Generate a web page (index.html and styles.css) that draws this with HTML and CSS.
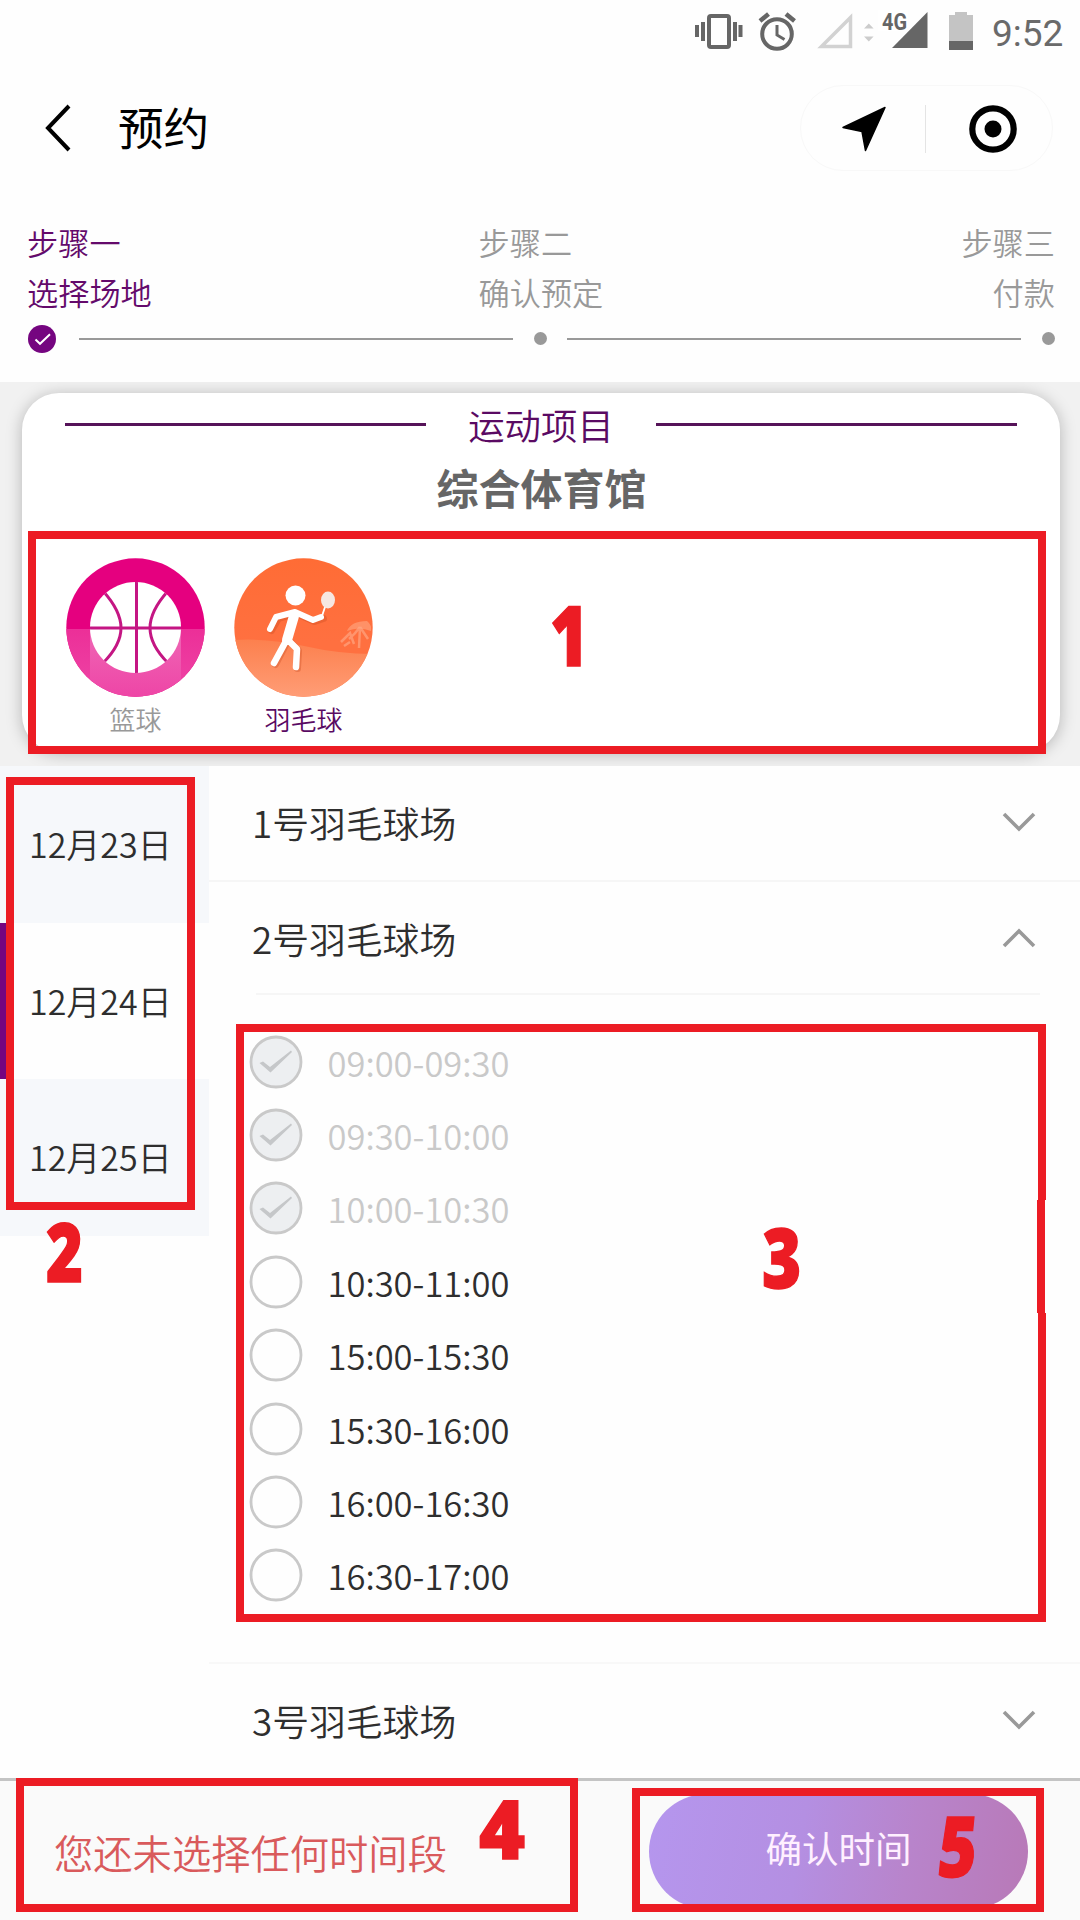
FILE: index.html
```html
<!DOCTYPE html>
<html lang="zh-CN">
<head>
<meta charset="utf-8">
<title>预约</title>
<link rel="stylesheet" href="styles.css">
</head>
<body>
<div class="page">
  <header class="top">
    <svg class="status-icons" width="300" height="56" viewBox="690 0 300 56">
      <g fill="#666">
        <rect x="695" y="25" width="4" height="12"/><rect x="701" y="22" width="4" height="19"/>
        <rect x="733" y="22" width="4" height="19"/><rect x="738.500" y="25" width="4" height="12"/>
      </g>
      <rect x="709" y="16" width="20" height="31" rx="2" fill="none" stroke="#666" stroke-width="4"/>
      <g fill="none" stroke="#666" stroke-width="4">
        <circle cx="777" cy="34" r="14.800"/>
        <path d="M760 21l8.500-7M786 14l8.500 7" stroke-width="4.500"/>
        <path d="M777 25v10l7.500 4.500" stroke-width="3"/>
      </g>
      <path d="M821.500 46.500L850.500 17.500V46.500Z" fill="none" stroke="#d2d2d2" stroke-width="3.500"/>
      <path d="M864 28.500l4.800-5 4.800 5zM864 36.500l4.800 5 4.800-5z" fill="#ccc"/>
      <path d="M892 48L927.500 12V48Z" fill="#666"/>
      <path d="M878 10H908V27L904 31H878Z" fill="#fff"/>
      <text class="net" x="882" y="29.500" textLength="25" lengthAdjust="spacingAndGlyphs">4G</text>
      <path d="M949 15h6v-3h12v3h6v26h-24z" fill="#c4c4c4"/>
      <rect x="949" y="41" width="24" height="9" fill="#666"/>
    </svg>
    <span class="clock">9:52</span>
  </header>

  <nav class="nav">
    <svg class="back" width="28" height="50" viewBox="0 0 28 50"><path d="M25 3L4 25L25 47" fill="none" stroke="#000" stroke-width="4"/></svg>
    <h1 class="title">预约</h1>
    <div class="capsule">
      <svg width="44" height="46" viewBox="0 0 44 46"><path d="M1 21.500L43 1.500L23.500 44.500L20 25.500Z" stroke="#000" stroke-width="1.500" stroke-linejoin="round"/></svg>
      <i class="capsule-line"></i>
      <svg width="48" height="48" viewBox="0 0 48 48"><circle cx="24" cy="24" r="20.700" fill="none" stroke="#000" stroke-width="6.200"/><circle cx="24" cy="24" r="8.500"/></svg>
    </div>
  </nav>

  <section class="steps">
    <div class="step-names">
      <div class="step active">步骤一<br>选择场地</div>
      <div class="step">步骤二<br>确认预定</div>
      <div class="step last">步骤三<br>付款</div>
    </div>
    <div class="track">
      <svg width="28" height="28" viewBox="0 0 28 28"><circle cx="14" cy="14" r="14" fill="#750580"/><path d="M7.500 14.500l4.500 4.300 10-9.500" fill="none" stroke="#fff" stroke-width="2"/></svg>
      <i class="rail first"></i><i class="dot"></i><i class="rail second"></i><i class="dot"></i>
    </div>
  </section>

  <section class="sports">
    <div class="card">
      <div class="card-head"><i></i><span>运动项目</span><i></i></div>
      <h2 class="venue">综合体育馆</h2>
      <div class="sport-list">
        <div class="sport">
          <svg width="139" height="139" viewBox="0 0 139 139">
            <defs>
              <clipPath id="disc"><circle cx="69.500" cy="69.500" r="69.200"/></clipPath>
              <clipPath id="ball"><ellipse cx="69.500" cy="69.500" rx="45.500" ry="45.500"/></clipPath>
              <linearGradient id="pink" x1="0" y1="0" x2="0" y2="1"><stop offset="0" stop-color="#ec2f98"/><stop offset="1" stop-color="#ee45a6"/></linearGradient>
              <linearGradient id="haze" x1="0" y1="0" x2="0" y2="1"><stop offset="0" stop-color="#f07abf"/><stop offset="1" stop-color="#ee45a6"/></linearGradient>
            </defs>
            <g clip-path="url(#disc)">
              <rect width="139" height="139" fill="#e5007f"/>
              <rect y="71" width="139" height="68" fill="url(#pink)"/>
              <rect x="24" y="71" width="91" height="68" fill="url(#haze)" opacity=".75"/>
            </g>
            <g clip-path="url(#ball)">
              <rect x="20" y="20" width="100" height="100" fill="#fff"/>
              <path d="M20 70H120M70.500 20V120M37 33Q55 53 55 70Q55 87 37 105M102 33Q84 53 84 70Q84 87 102 105" fill="none" stroke="#c41683" stroke-width="3"/>
            </g>
          </svg>
          <span>篮球</span>
        </div>
        <div class="sport chosen">
          <svg width="139" height="139" viewBox="0 0 139 139">
            <defs>
              <clipPath id="disc2"><circle cx="69.500" cy="69.500" r="69.200"/></clipPath>
              <linearGradient id="orange" x1="0" y1="0" x2="0" y2="1"><stop offset="0" stop-color="#ff6c35"/><stop offset=".6" stop-color="#ff7040"/></linearGradient>
              <linearGradient id="peach" x1="0" y1="0" x2="0" y2="1"><stop offset="0" stop-color="#fc804e"/><stop offset="1" stop-color="#ff9d76"/></linearGradient>
            </defs>
            <g clip-path="url(#disc2)">
              <rect width="139" height="139" fill="url(#orange)"/>
              <path d="M0 82Q35 80 70 88T139 96V139H0Z" fill="url(#peach)"/>
            </g>
            <path d="M113 73q4-10 20-10q5 4 4 10q-12-5-24 0z" fill="#ff9a72" opacity=".8"/>
            <path d="M107 84l9-9 4 11M126 69q-5 7-11 12M126 69l8 12M126 69l-1 21M110 88l6-4" fill="none" stroke="#ffad8c" stroke-width="2.500" opacity=".6"/>
            <g transform="translate(1.500 1.500)" fill="none" stroke="#c94a20" stroke-linecap="round" stroke-linejoin="round" opacity=".35">
              <path d="M36 71L43 59L61 54L79 62L88 59M59 57L53 80L40 105M53 80L63 91L62 109" stroke-width="7"/>
            </g>
            <g fill="none" stroke="#fff" stroke-linecap="round" stroke-linejoin="round">
              <path d="M36 71L42 59L61 54L79 62L87 59" stroke-width="6"/>
              <path d="M60 58L53 82" stroke-width="10"/>
              <path d="M52 83L40 105M54 82L63 91L62 109" stroke-width="6.500"/>
              <path d="M88 58L91 49" stroke-width="1.800"/>
            </g>
            <circle cx="61.500" cy="37.500" r="10" fill="#fff"/>
            <ellipse cx="94" cy="42" rx="7" ry="8.500" fill="#f6e7e2"/>
          </svg>
          <span>羽毛球</span>
        </div>
      </div>
    </div>
    <div class="mark mark-1"></div>
    <b class="num num-1">1</b>
  </section>

  <main class="booking">
    <aside class="dates">
      <div class="date">12月23日</div>
      <div class="date current">12月24日</div>
      <div class="date">12月25日</div>
      <div class="mark mark-2"></div>
      <b class="num num-2">2</b>
    </aside>
    <div class="courts">
      <div class="court"><span>1号羽毛球场</span><svg width="34" height="20" viewBox="0 0 34 20"><path d="M2 2L17 17L32 2"/></svg></div>
      <div class="court open"><span>2号羽毛球场</span><svg width="34" height="20" viewBox="0 0 34 20"><path d="M2 18L17 3L32 18"/></svg></div>
      <div class="slots">
        <div class="slot off"><svg viewBox="0 0 54 54"><circle cx="27" cy="27" r="25"/><path d="M10.500 28L14 26.500L21 32L42 15.500L43 17L21.500 37.500Z"/></svg>09:00-09:30</div>
        <div class="slot off"><svg viewBox="0 0 54 54"><circle cx="27" cy="27" r="25"/><path d="M10.500 28L14 26.500L21 32L42 15.500L43 17L21.500 37.500Z"/></svg>09:30-10:00</div>
        <div class="slot off"><svg viewBox="0 0 54 54"><circle cx="27" cy="27" r="25"/><path d="M10.500 28L14 26.500L21 32L42 15.500L43 17L21.500 37.500Z"/></svg>10:00-10:30</div>
        <div class="slot"><svg viewBox="0 0 54 54"><circle cx="27" cy="27" r="25"/></svg>10:30-11:00</div>
        <div class="slot"><svg viewBox="0 0 54 54"><circle cx="27" cy="27" r="25"/></svg>15:00-15:30</div>
        <div class="slot"><svg viewBox="0 0 54 54"><circle cx="27" cy="27" r="25"/></svg>15:30-16:00</div>
        <div class="slot"><svg viewBox="0 0 54 54"><circle cx="27" cy="27" r="25"/></svg>16:00-16:30</div>
        <div class="slot"><svg viewBox="0 0 54 54"><circle cx="27" cy="27" r="25"/></svg>16:30-17:00</div>
      </div>
      <div class="court third"><span>3号羽毛球场</span><svg width="34" height="20" viewBox="0 0 34 20"><path d="M2 2L17 17L32 2"/></svg></div>
      <svg class="mark-3" width="810" height="598" viewBox="0 0 810 598"><path d="M0 0H810V176H809V289H810V598H0ZM8 8V590H802V289H801V176H802V8Z" fill="#ec1c24" fill-rule="evenodd"/></svg>
      <b class="num num-3">3</b>
    </div>
  </main>

  <footer class="bar">
    <span class="hint">您还未选择任何时间段</span>
    <button class="confirm">确认时间</button>
    <div class="mark mark-4"></div>
    <div class="mark mark-5"></div>
    <b class="num num-4">4</b>
    <b class="num num-5">5</b>
  </footer>
</div>
</body>
</html>
```
FILE: styles.css
```css
* { box-sizing: border-box; }
body { margin: 0; background: #fefefe; font-family: "Noto Sans CJK SC", sans-serif; font-weight: 350; color: #2e2e2e; }
.page { width: 1080px; height: 1920px; display: flex; flex-direction: column; overflow: hidden; }
svg { display: block; flex: none; }

.top { height: 66px; display: flex; padding-left: 690px; }
.net { font: bold 23px Roboto, sans-serif; fill: #666; }
.clock { margin-left: 2px; padding-top: 12px; font: 37px/44px Roboto, sans-serif; color: #6a6a6a; }

.nav { height: 124px; display: flex; align-items: center; padding: 0 27px 0 44px; }
.title { margin: 0 0 0 46px; font-size: 45.6px; line-height: 60px; font-weight: 400; color: #000; padding-bottom: 5px; }
.capsule { margin-left: auto; width: 253px; height: 86px; border: 1px solid #f8f8f8; border-radius: 43px; display: flex; align-items: center; padding: 2px 35px 0 41px; justify-content: space-between; }
.capsule-line { width: 1px; height: 48px; background: #e4e4e4; margin-right: 4px; }

.steps { height: 192px; padding: 27px 25px 0 27px; }
.step-names { display: flex; height: 107px; font-size: 31.2px; line-height: 50px; color: #999; }
.step { width: 451.5px; }
.active { color: #640a6b; }
.last { width: auto; margin-left: auto; text-align: right; }
.track { display: flex; align-items: center; height: 29px; padding-left: 1px; }
.rail { height: 2px; background: #999; }
.first { width: 434px; margin: 0 21px 0 23px; }
.second { width: 455px; margin: 0 21px 0 20px; }
.dot { width: 13px; height: 13px; border-radius: 50%; background: #999; }

.sports { height: 384px; padding: 11px 20px 14px 22px; background: #f1f1f1; position: relative; overflow: hidden; }
.card { height: 359px; border-radius: 37px; background: #fff; box-shadow: 0 2px 16px rgba(0,0,0,.25); padding-top: 7px; }
.card-head { display: flex; align-items: center; justify-content: space-between; height: 48px; padding: 0 43px; font-size: 36.4px; line-height: 48px; color: #5a0a63; }
.card-head i { width: 361px; height: 3px; background: #561359; }
.venue { margin: 11px 0 0 1px; text-align: center; font-size: 42px; line-height: 56px; font-weight: 700; color: #666; }
.sport-list { display: flex; gap: 29px; padding: 43px 0 0 44px; }
.sport { width: 139px; text-align: center; font-size: 26px; line-height: 36px; color: #999; }
.sport span { display: block; margin-top: 4px; }
.chosen { color: #5a0a63; }

.booking { height: 1012px; display: flex; }
.dates { width: 209px; position: relative; }
.date { height: 156.7px; padding-left: 29px; background: #f6f8fb; font-size: 34px; line-height: 155px; white-space: nowrap; }
.date.current { background: #fefefe; box-shadow: inset 7px 0 #750580; }
.courts { width: 871px; position: relative; }
.court { height: 116px; padding: 0 44px 2px 43px; display: flex; align-items: center; justify-content: space-between; font-size: 36.8px; border-bottom: 2px solid #f6f6f6; }
.court svg { fill: none; stroke: #999; stroke-width: 3.6px; }
.open { height: 113px; margin: 0 40px 0 47px; padding: 1px 4px 0 0; }
.open span { margin-left: -4px; }
.slots { height: 669px; padding: 30px 0 0 39.5px; border-bottom: 2px solid #f8f8f8; }
.slot { height: 73.4px; display: flex; align-items: center; gap: 25px; font-size: 34.5px; }
.slot svg { width: 54px; height: 54px; fill: none; stroke: #c9c9c9; stroke-width: 2.8px; }
.off { color: #c9c9c9; }
.off circle { fill: #edeff1; }
.off path { fill: #c5c7c9; stroke: none; }
.third { height: 114px; border: 0; }

.bar { height: 142px; position: relative; display: flex; justify-content: space-between; padding: 13px 52px 0 54px; background: #fafafa; border-top: 3px solid #c4c4c4; }
.hint { font-size: 39.3px; line-height: 58px; padding-top: 29px; color: #d95a5c; }
.confirm { width: 379px; height: 115px; border: 0; border-radius: 58px; background: linear-gradient(100deg, #b596ee 0%, #b48fe2 40%, #b884cb 68%, #b879b7 100%); color: #fff0ff; font: 36.5px/54px "Noto Sans CJK SC", sans-serif; padding: 0 0 7px; }

/* numbered callouts over the interface */
.mark { position: absolute; border: 8px solid #ec1c24; }
.mark-1 { left: 28px; top: 149px; width: 1018px; height: 223px; }
.mark-2 { left: 6px; top: 11px; width: 189px; height: 433px; }
.mark-3 { position: absolute; left: 27px; top: 258px; }
.mark-4 { left: 16px; top: -3px; width: 562px; height: 134px; }
.mark-5 { left: 632px; top: 7px; width: 412px; height: 124px; }
.num { position: absolute; font: 800 84px/84px "Open Sans", sans-serif; color: #ec1c24; transform-origin: 0 0; -webkit-text-stroke: 1.5px #ec1c24; }
.num-1 { left: 550px; top: 210px; transform: scaleX(.78); }
.num-2 { left: 46px; top: 442px; font-size: 82px; transform: scaleX(.77); }
.num-3 { left: 553px; top: 448px; transform: scaleX(.8); }
.num-4 { left: 479px; top: 4px; font-size: 82px; transform: scaleX(.96); }
.num-5 { left: 943px; top: 22px; transform: scaleX(.78) skewX(-7deg); }
```
